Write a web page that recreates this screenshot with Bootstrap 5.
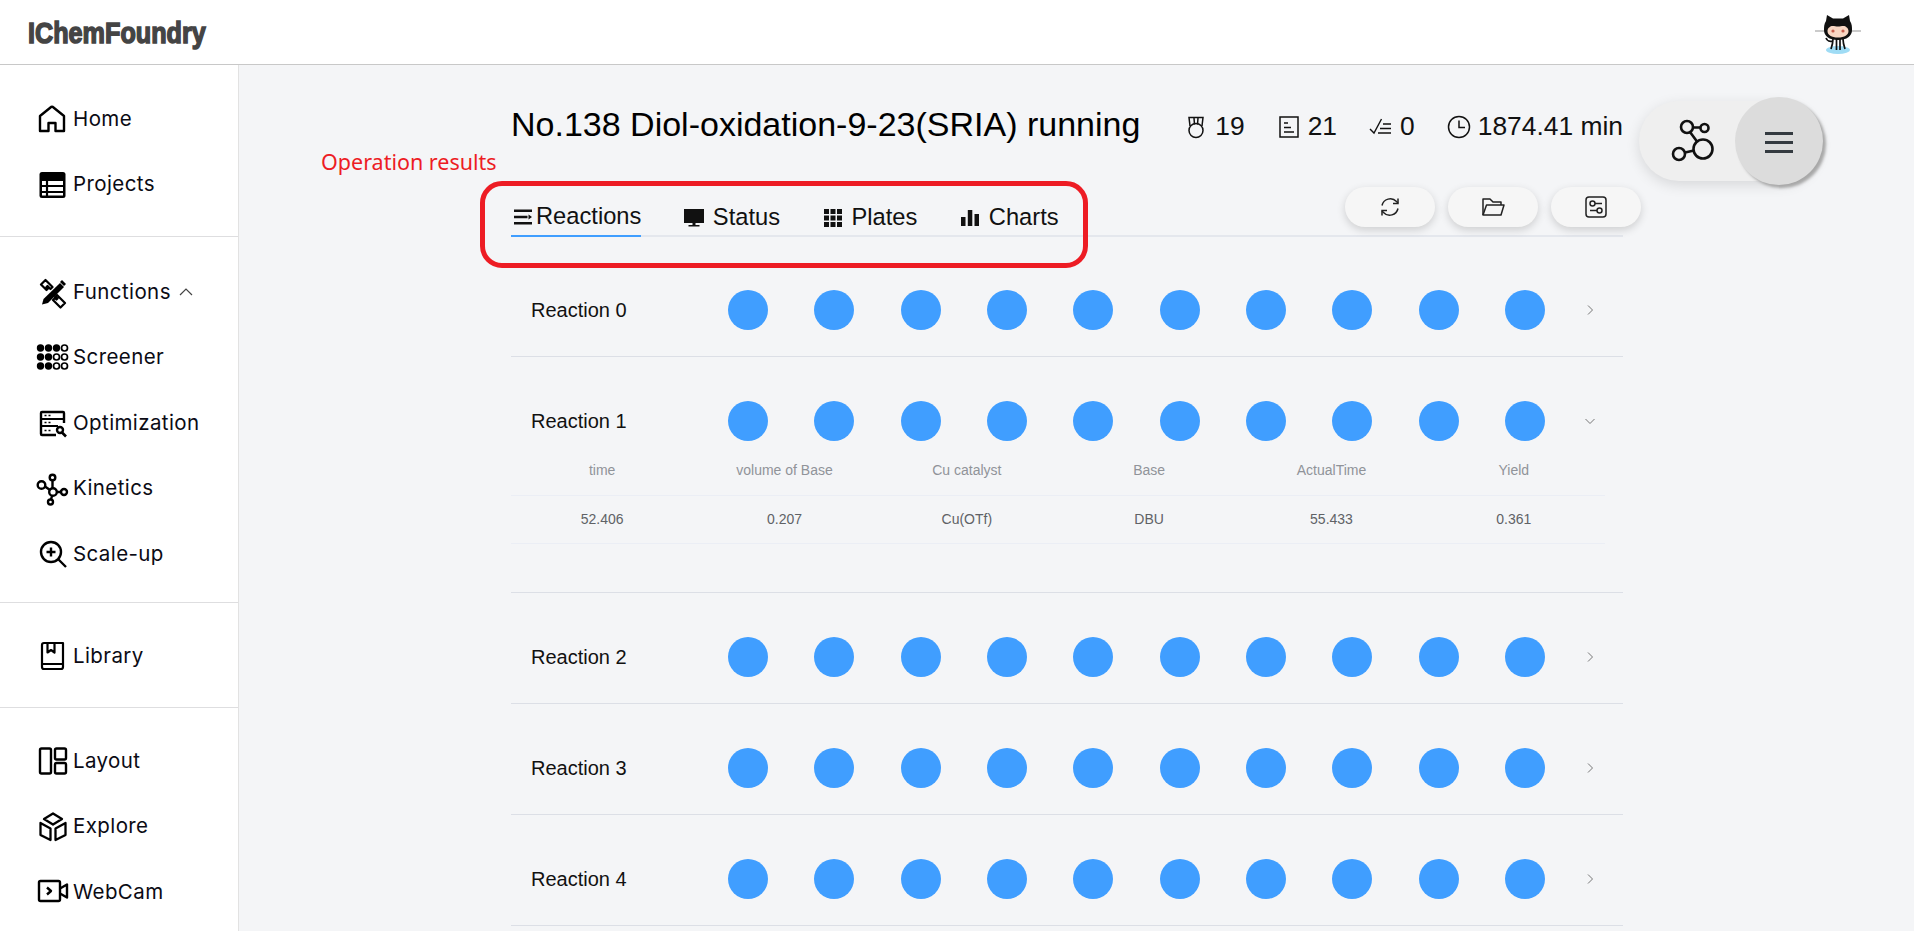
<!doctype html>
<html lang="en">

<head>
    <meta charset="UTF-8">
    <meta name="viewport" content="width=device-width, initial-scale=1.0">
    <title>IChemFoundry</title>
    <link href="https://cdn.jsdelivr.net/npm/bootstrap@5.3.0/dist/css/bootstrap.min.css" rel="stylesheet">
    <style>
        body { height: 100vh; overflow: hidden; background: #f4f5f7; font-family: "Liberation Sans", Arial, sans-serif; color: #111; }
        .top-bar { height: 65px; background: #fff; border-bottom: 1px solid #c8c8c8; padding: 0 53px 0 28px; }
        .brand-text { display: inline-block; font-family: "Liberation Sans", sans-serif; font-weight: 700; font-size: 30px; color: #444; -webkit-text-stroke: 1.5px #444; transform: scaleX(.84); transform-origin: left center; }
        .octo { width: 46px; height: 42px; margin-top: 6px; }

        .side-bar { width: 239px; flex: none; background: #fff; border-right: 1px solid #e2e2e2; }
        .side-group { padding: 21px 0 19px; border-bottom: 1px solid #dedee0; }
        .side-group.tools { padding: 22px 0 15.5px; }
        .side-group.lib { padding: 20px 0 18.5px; }
        .side-group.last { padding-top: 20px; border-bottom: 0; }
        .side-item { height: 65.5px; padding: 1px 0 0 36px; display: flex; align-items: center; font-family: Inter, sans-serif; font-size: 20.5px; letter-spacing: .4px; color: #0b0b14; text-decoration: none; }
        .side-icon { width: 34px; height: 34px; margin-right: 3px; flex: none; }

        .main-area { flex: 1; position: relative; }
        .content-col { width: 1112px; margin-left: 272px; }
        .title-row { height: 88px; padding-top: 32px; }
        .run-title { font-size: 34px; font-weight: 400; margin: 0 0 3px; line-height: 56px; color: #000; }
        .run-stats { font-size: 26.4px; padding-top: 4px; gap: 32px; }
        .stat-icon { width: 24px; height: 24px; margin-right: 7px; }

        .tab-row { height: 84px; border-bottom: 2px solid #e4e7ed; }
        .tab-nav { gap: 42.5px; }
        .tab-link { height: 44px; font-size: 23.7px; color: #111; padding: 5px 0 0; display: flex; align-items: center; margin-bottom: -2px; text-decoration: none; gap: 9px; }
        .tab-link.on { border-bottom: 2px solid #409eff; gap: 3px; padding: 5px 0 0 2px; }
        .tab-icon { width: 20px; height: 20px; }
        .tool-group { gap: 13px; margin-right: -18px; margin-bottom: 8px; }
        .tool-btn { width: 90px; height: 40px; padding: 0; background: #f6f6f6; border: 0; box-shadow: 0 3px 8px rgba(0, 0, 0, .16); }
        .tool-btn svg { width: 24px; height: 24px; }

        .reaction-list { margin-top: 9px; }
        .reaction-row { border-bottom: 1px solid #dcdfe6; padding: 44px 0 26px; }
        .reaction-name { width: 217px; padding-left: 20px; font-size: 20px; flex: none; }
        .dot-line { width: 817px; flex: none; }
        .dot-item { width: 40px; height: 40px; border-radius: 50%; background: #409eff; }
        .row-chevron { width: 12px; height: 12px; margin-left: 39px; }

        .result-table { width: 1094px; margin: 6px 0 22px; table-layout: fixed; --bs-table-bg: transparent; }
        .result-table th, .result-table td { height: 48px; text-align: center; vertical-align: middle; font-size: 14px; font-weight: 400; padding: 0; border-bottom: 1px solid #ebeef5; }
        .result-table th { color: #909399; }
        .result-table td { color: #606266; }

        .note-label { position: absolute; left: 82px; top: 81px; font-family: "Noto Sans", sans-serif; font-size: 21.5px; color: #ed1c24; }
        .note-box { position: absolute; left: 241px; top: 116px; width: 608px; height: 87px; border: 5px solid #ed1c24; border-radius: 22px; }

        .fab-pill { position: absolute; left: 1400px; top: 36px; width: 180px; height: 80px; border-radius: 40px; background: #efefef; box-shadow: 0 4px 14px rgba(0, 0, 0, .12); }
        .fab-mol { position: absolute; left: 32px; top: 12px; width: 56px; height: 56px; }
        .fab-round { position: absolute; right: -4px; top: -4px; width: 88px; height: 88px; border-radius: 50%; background: #dcdcdc; box-shadow: 3px 3px 3px #a8a8a8; }
        .fab-bars { position: absolute; left: 30px; top: 35px; width: 28px; height: 21px; border-top: 3px solid #343a40; border-bottom: 3px solid #343a40; }
        .fab-bars::after { content: ""; position: absolute; left: 0; right: 0; top: 6px; height: 3px; background: #343a40; }
    </style>
</head>

<body>
    <header class="top-bar d-flex justify-content-between align-items-center">
        <span class="brand-text">IChemFoundry</span>
        <svg class="octo" viewBox="0 0 46 42">
            <path d="M0 17h12M34 17h12" stroke="#bbb" stroke-width="1.6" />
            <ellipse cx="23" cy="36" rx="12" ry="4" fill="#9fdcf5" />
            <path d="M11 7 12 1l6 3.4h10L34 1l1 6c2 3 2 6 2 9 0 6-5 10-14 10S9 22 9 16c0-3 0-6 2-9z" fill="#111" />
            <path d="M12.500 17c0-3 3-5 5-5 2 0 3.500 .6 5.500 .6s3.500-.6 5.500-.6c2 0 5 2 5 5 0 4-4 6.500-10.500 6.500S12.500 21 12.500 17z" fill="#f8d6c3" />
            <circle cx="18" cy="17" r="1.600" fill="#c9604f" />
            <circle cx="28" cy="17" r="1.600" fill="#c9604f" />
            <path d="M18 25c0 4-1 7-2 10M21.500 25v11M25 25v11M28 25c0 4 1 7 2 10M18 27c-3 1-6 0-7-3" stroke="#111" stroke-width="1.700" fill="none" />
        </svg>
    </header>

    <div class="d-flex">
        <nav class="side-bar">
            <div class="side-group">
                <a class="side-item" href="#"><svg class="side-icon" viewBox="0 0 34 34" fill="none" stroke="#000" stroke-width="2.400" stroke-linejoin="round"><path d="M4 14 14.500 5.500a2 2 0 0 1 3 0L28 14V29H19.500V21h-7v8H4z" /></svg>Home</a>
                <a class="side-item" href="#"><svg class="side-icon" viewBox="0 0 34 34"><rect x="3.500" y="4" width="26" height="26" rx="2.500" fill="#000" /><path d="M6 13h21v4H6zM6 19h21v4H6zM6 25h21v2.500H6z" fill="#fff" /><path d="M11 12v17" stroke="#000" stroke-width="2.200" /></svg>Projects</a>
            </div>
            <div class="side-group tools">
                <a class="side-item" href="#"><svg class="side-icon" viewBox="0 0 34 34"><path d="M24 8 28 12 12 28 6 29.500 7.500 24z" fill="#000" /><path d="M26 5l4 4-2 2-4-4z" fill="#000" /><path d="M5 9.500 9.500 5l7 7-2 2-3-3-1 1 1.500 1.500-1.500 1.500z M19 22l2-2 8 8-4.500 4.500-7.500-7.500 2-2 1.500 1.500 1-1z" fill="none" stroke="#000" stroke-width="2.200" stroke-linejoin="round" /></svg>Functions<svg class="ms-2" width="14" height="10" viewBox="0 0 14 10" fill="none" stroke="#444" stroke-width="1.200"><path d="M1 8 7 2l6 6" /></svg></a>
                <a class="side-item" href="#"><svg class="side-icon" viewBox="0 0 34 34"><g fill="#000"><circle cx="4.500" cy="7" r="3.700" /><circle cx="12.500" cy="7" r="3.700" /><circle cx="20.500" cy="7" r="3.700" /><circle cx="4.500" cy="16" r="3.700" /><circle cx="12.500" cy="16" r="3.700" /><circle cx="4.500" cy="25" r="3.700" /><circle cx="12.500" cy="25" r="3.700" /></g><g fill="none" stroke="#000" stroke-width="1.700"><circle cx="28.500" cy="7" r="3" /><circle cx="20.500" cy="16" r="3" /><circle cx="28.500" cy="16" r="3" /><circle cx="20.500" cy="25" r="3" /><circle cx="28.500" cy="25" r="3" /></g></svg>Screener</a>
                <a class="side-item" href="#"><svg class="side-icon" viewBox="0 0 34 34" fill="none" stroke="#000" stroke-width="2"><path d="M28 17V7a1 1 0 0 0-1-1H6a1 1 0 0 0-1 1v21a1 1 0 0 0 1 1h14" stroke-width="2.400" /><path d="M5 13h23M5 20h17" /><path d="M8.500 9.500h2M12.500 9.500h2M8.500 16.500h2M12.500 16.500h2M8.500 24.500h2M12.500 24.500h2" stroke-width="1.500" /><circle cx="24" cy="24" r="3" stroke-width="2.400" /><path d="M26 26.500 30 30.500" stroke-width="2.600" /></svg>Optimization</a>
                <a class="side-item" href="#"><svg class="side-icon" viewBox="0 0 34 34" fill="none" stroke="#000" stroke-width="2.400"><circle cx="5.500" cy="13" r="3.800" /><circle cx="16.500" cy="5.500" r="2.800" /><circle cx="17" cy="20" r="3.800" /><circle cx="28" cy="20" r="3" /><circle cx="14.500" cy="30" r="2.500" /><path d="M9 14.500 14 18M16.500 8.500V16M21 20h4M16 24l-1 3.500" /></svg>Kinetics</a>
                <a class="side-item" href="#"><svg class="side-icon" viewBox="0 0 34 34" fill="none" stroke="#000" stroke-width="2.400"><circle cx="15" cy="15" r="10" /><path d="M22.500 22.500 30 30M15 10.500v9M10.500 15h9" /></svg>Scale-up</a>
            </div>
            <div class="side-group lib">
                <a class="side-item" href="#"><svg class="side-icon" viewBox="0 0 34 34" fill="none" stroke="#000" stroke-width="2.200" stroke-linejoin="round"><path d="M6 6a2 2 0 0 1 2-2h19v24a2 2 0 0 1-2 2H8a2 2 0 0 1-2-2z" /><path d="M6 25h21M11.500 4v9.500l3.500-2.500 3.500 2.500V4" /></svg>Library</a>
            </div>
            <div class="side-group last">
                <a class="side-item" href="#"><svg class="side-icon" viewBox="0 0 34 34" fill="none" stroke="#000" stroke-width="2.400"><rect x="4" y="4.500" width="11" height="25" rx="1.500" /><rect x="19" y="4.500" width="11" height="11" rx="1.500" /><rect x="19" y="19" width="11" height="10.500" rx="1.500" /></svg>Layout</a>
                <a class="side-item" href="#"><svg class="side-icon" viewBox="0 0 34 34" fill="none" stroke="#000" stroke-width="2.300" stroke-linejoin="round"><path d="M17 3.500 26 9 17 14.500 8 9z" /><path d="M4.500 13 14.500 18.500V30L4.500 25zM29.500 13 19.500 18.500V30L29.500 25z" /></svg>Explore</a>
                <a class="side-item" href="#"><svg class="side-icon" viewBox="0 0 34 34" fill="none" stroke="#000" stroke-width="2.400" stroke-linejoin="round"><rect x="3" y="6" width="21" height="20" rx="1.500" /><path d="M24 13.500 31 9.500V22.500L24 18.500" /><path d="M11 12.500 15 16 11 19.500" /></svg>WebCam</a>
            </div>
        </nav>

        <main class="main-area">
            <div class="content-col">
                <div class="title-row d-flex justify-content-between align-items-center">
                    <h1 class="run-title">No.138 Diol-oxidation-9-23(SRIA) running</h1>
                    <div class="run-stats d-flex align-items-center">
                        <span class="d-flex align-items-center"><svg class="stat-icon" viewBox="0 0 24 24" fill="none" stroke="#111" stroke-width="1.500"><circle cx="12" cy="15.500" r="7" /><path d="M6 11 5 2.500h14L18 11M10 3l.5 6.500M14 3l-.5 6.500" /></svg>19</span>
                        <span class="d-flex align-items-center"><svg class="stat-icon" viewBox="0 0 24 24" fill="none" stroke="#111" stroke-width="1.500"><rect x="3" y="2" width="18" height="20" /><path d="M7 8h4M7 12.500h7M7 17h10" /></svg>21</span>
                        <span class="d-flex align-items-center"><svg class="stat-icon" viewBox="0 0 24 24" fill="none" stroke="#111" stroke-width="1.400"><path d="M1 14l4 4L12.500 4M14 9h8M11 13.500h11M9 18h13" /></svg>0</span>
                        <span class="d-flex align-items-center"><svg class="stat-icon" viewBox="0 0 24 24" fill="none" stroke="#111" stroke-width="1.500"><circle cx="12" cy="12" r="10.500" /><path d="M12 5.500V12.500H18" /></svg>1874.41 min</span>
                    </div>
                </div>

                <div class="tab-row d-flex justify-content-between align-items-end">
                    <ul class="nav tab-nav">
                        <li class="nav-item"><a class="tab-link on" href="#"><svg class="tab-icon" viewBox="0 0 20 20" fill="#111"><path d="M1 2.500h18v2.600H1zM1 8.700h13.500v2.600H1zM1 15h18v2.600H1zM15.500 7.500 19 10l-3.500 2.500z" /></svg>Reactions</a></li>
                        <li class="nav-item"><a class="tab-link" href="#"><svg class="tab-icon" viewBox="0 0 20 20" fill="#111"><rect x="0" y="1" width="20" height="14" /><path d="M8.500 15h3v2h-3zM4.500 17h11v1.500h-11z" /></svg>Status</a></li>
                        <li class="nav-item"><a class="tab-link" href="#"><svg class="tab-icon" viewBox="0 0 20 20" fill="#111"><path d="M1 1h5v5H1zM7.500 1h5v5h-5zM14 1h5v5h-5zM1 7.500h5v5H1zM7.500 7.500h5v5h-5zM14 7.500h5v5h-5zM1 14h5v5H1zM7.500 14h5v5h-5zM14 14h5v5h-5z" /></svg>Plates</a></li>
                        <li class="nav-item"><a class="tab-link" href="#"><svg class="tab-icon" viewBox="0 0 20 20" fill="#111"><path d="M1 9h4.500v9H1zM7.800 2h4.500v16H7.800zM14.500 6H19v12h-4.500z" /></svg>Charts</a></li>
                    </ul>
                    <div class="tool-group d-flex">
                        <button class="btn tool-btn rounded-pill" type="button"><svg viewBox="0 0 24 24" fill="none" stroke="#222" stroke-width="1.500"><path d="M4 10.500A8.500 8.500 0 0 1 18.500 6.500L20 8M20 13.500A8.500 8.500 0 0 1 5.500 17.500L4 16" /><path d="M20 3.500V8.500H15M4 20.500V15.500H9" /></svg></button>
                        <button class="btn tool-btn rounded-pill" type="button"><svg viewBox="0 0 24 24" fill="none" stroke="#222" stroke-width="1.500" stroke-linejoin="round"><path d="M2 20V4h7l3 3h8v3" /><path d="M2 20 5.500 10H23l-3 10z" /></svg></button>
                        <button class="btn tool-btn rounded-pill" type="button"><svg viewBox="0 0 24 24" fill="none" stroke="#222" stroke-width="1.500"><rect x="2" y="2" width="20" height="20" rx="3" /><circle cx="8.500" cy="8.500" r="2.500" /><path d="M11 8.500h7" /><circle cx="15.500" cy="15.500" r="2.500" /><path d="M13 15.500H6" /></svg></button>
                    </div>
                </div>

                <div class="reaction-list" id="reactionList"></div>
            </div>

            <span class="note-label">Operation results</span>
            <div class="note-box"></div>

            <div class="fab-pill">
                <svg class="fab-mol" viewBox="0 0 56 56" fill="none" stroke="#111" stroke-width="2.600"><circle cx="32" cy="36" r="9.500" /><circle cx="8" cy="41" r="6" /><circle cx="16" cy="14" r="6" /><circle cx="33.500" cy="15" r="4" /><path d="M14 39.500 23 37.500M19 19 26 28.500M22 14.500h7.500" /></svg>
                <div class="fab-round"><div class="fab-bars"></div></div>
            </div>
        </main>
    </div>

    <script>
        const reactionList = document.getElementById('reactionList');
        const columns = ['time', 'volume of Base', 'Cu catalyst', 'Base', 'ActualTime', 'Yield'];
        const values = ['52.406', '0.207', 'Cu(OTf)', 'DBU', '55.433', '0.361'];

        for (let i = 0; i < 5; i++) {
            const open = i === 1;
            const row = document.createElement('div');
            row.classList.add('reaction-row');
            row.innerHTML = `
                <div class="d-flex align-items-center">
                    <div class="reaction-name">Reaction ${i}</div>
                    <div class="dot-line d-flex justify-content-between">${'<span class="dot-item"></span>'.repeat(10)}</div>
                    <svg class="row-chevron" viewBox="0 0 12 12" fill="none" stroke="#777" stroke-width="1">
                        <path d="${open ? 'M1.500 4 6 8.500 10.500 4' : 'M4 1.500 8.500 6 4 10.500'}" />
                    </svg>
                </div>
                ${open ? `<table class="table result-table">
                    <tr>${columns.map(c => `<th>${c}</th>`).join('')}</tr>
                    <tr>${values.map(v => `<td>${v}</td>`).join('')}</tr>
                </table>` : ''}
            `;
            reactionList.appendChild(row);
        }
    </script>
    <script src="https://cdn.jsdelivr.net/npm/bootstrap@5.3.0/dist/js/bootstrap.bundle.min.js"></script>
</body>

</html>
